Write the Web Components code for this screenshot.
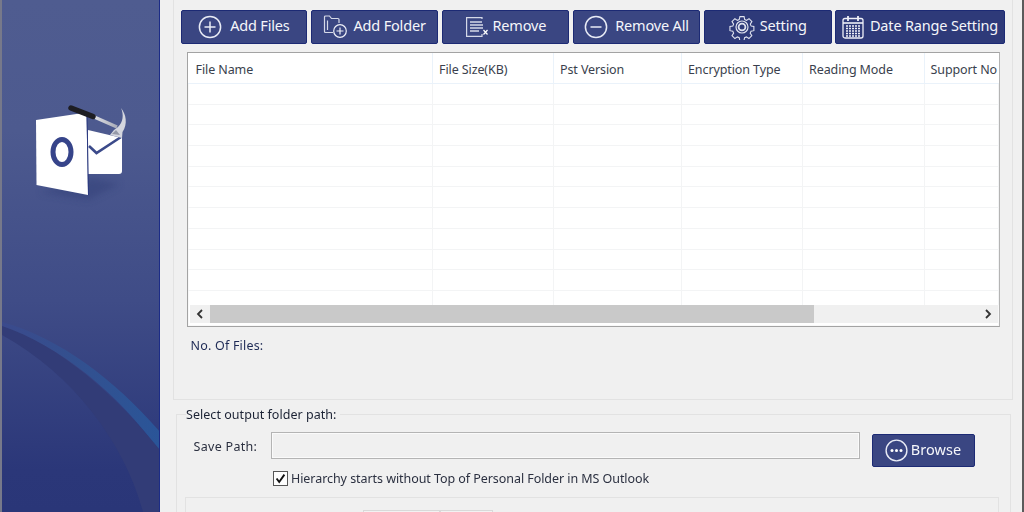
<!DOCTYPE html>
<html><head><meta charset="utf-8">
<style>
html,body{margin:0;padding:0;background:#f0f0f0}
body{width:1024px;height:512px;overflow:hidden;font-family:"Noto Sans","Open Sans",sans-serif;font-size:12.5px;color:#1e2a44}
</style></head><body>
<app-shell>
  <side-bar slot="side"></side-bar>
  <files-panel slot="main">
    <tool-bar>
      <tool-button icon="plus" w="126.8" g="8">Add Files</tool-button>
      <tool-button icon="folder" w="127.4" g="5">Add Folder</tool-button>
      <tool-button icon="remove" w="127.4" g="3.5">Remove</tool-button>
      <tool-button icon="minus" w="127.4" g="7">Remove All</tool-button>
      <tool-button icon="gear" w="127.8" g="5" dark>Setting</tool-button>
      <tool-button icon="cal" w="169.5" g="6" dark>Date Range Setting</tool-button>
    </tool-bar>
    <file-table></file-table>
    <file-count>No. Of Files:</file-count>
  </files-panel>
  <output-group slot="main"></output-group>
</app-shell>
<script>
const icons={
plus:`<svg width="24" height="24" viewBox="0 0 24 24" fill="none" stroke="#e8ebf5" stroke-width="1.5"><circle cx="12" cy="12" r="10.6"/><path d="M12 6.5v11M6.5 12h11"/></svg>`,
minus:`<svg width="24" height="24" viewBox="0 0 24 24" fill="none" stroke="#e8ebf5" stroke-width="1.5"><circle cx="12" cy="12" r="10.6"/><path d="M6.5 12h11"/></svg>`,
folder:`<svg width="25" height="25" viewBox="0 0 25 25" fill="none" stroke="#d5d9e8" stroke-width="1.2"><path d="M10 18.5H2.5a1 1 0 0 1-1-1V3a1 1 0 0 1 1-1h4l2 2.5h6.5a1 1 0 0 1 1 1V9"/><path d="M4.5 16V6.5" /><circle cx="17" cy="17" r="6.3" stroke="#eef0f8"/><path d="M17 13.5v7M13.5 17h7" stroke="#eef0f8"/></svg>`,
remove:`<svg width="24" height="22" viewBox="0 0 24 22" fill="none" stroke="#d5d9e8" stroke-width="1.2"><path d="M17 3V1.6H1.6v18.8H17V18"/><path d="M5 6h12M5 9h13M5 12h13M5 15h9" stroke-width="1.4"/><path d="M18.5 14l4 4.5M22.500 14l-4 4.5" stroke="#fff"/></svg>`,
gear:`<svg width="26" height="26" viewBox="0 0 26 26" fill="none" stroke="#dfe2ee" stroke-width="1.2"><path d="M10.7 1.5h4.6l.7 3.2 2 .9 2.8-1.8 3.2 3.2-1.8 2.8.9 2-.1 0 3.2.7v4.6l-3.2.7-.9 2 1.8 2.8-3.2 3.2-2.8-1.8-2 .9-.7 3.2h-4.6l-.7-3.2-2-.9-2.8 1.8-3.2-3.2 1.8-2.8-.9-2-3.2-.7v-4.6l3.2-.7.9-2-1.8-2.8 3.2-3.2 2.8 1.8 2-.9z" transform="translate(1.3 1.3) scale(.9)"/><circle cx="13" cy="13" r="6"/><circle cx="13" cy="13" r="3.4" stroke-width="1.8"/></svg>`,
cal:`<svg width="22" height="24" viewBox="0 0 22 24" fill="none" stroke="#eef0f8" stroke-width="1.3"><rect x="1" y="3.5" width="20" height="19.5" rx="2"/><path d="M1 8h20" stroke-width="1.6"/><path d="M6 1v5M16 1v5" stroke-width="1.8"/><path d="M4 11h14M4 13.5h14M4 16h14M4 18.5h14M4 21h14" stroke-dasharray="2 1" stroke-width="1.5"/></svg>`,
dots:`<svg width="23" height="23" viewBox="0 0 23 23" fill="none" stroke="#e8ebf5" stroke-width="1.4"><circle cx="11.5" cy="11.5" r="10.4"/><g fill="#fff" stroke="none"><circle cx="7" cy="11.5" r="1.5"/><circle cx="11.5" cy="11.5" r="1.5"/><circle cx="16" cy="11.5" r="1.5"/></g></svg>`
};
function def(name,css,html,init){
  customElements.define(name,class extends HTMLElement{
    constructor(){super();const r=this.attachShadow({mode:'open'});r.innerHTML=`<style>${css}</style>${html}`;}
    connectedCallback(){init&&init.call(this,this.shadowRoot);}
  });
}
def('app-shell',`:host{display:flex;width:1024px;height:512px;overflow:hidden}
 .side{flex:0 0 160px}
 .main{flex:0 0 862px;display:flex;flex-direction:column;height:512px;background:#f0f0f0;filter:blur(.35px)}
 .edge{flex:0 0 2px;background:#5b5b5b}`,
 `<div class="side"><slot name="side"></slot></div><div class="main"><slot name="main"></slot></div><div class="edge"></div>`);
def('side-bar',`:host{display:block;position:relative;box-sizing:border-box;width:160px;height:512px;overflow:hidden;border-left:2px solid #77798a;border-right:1px solid #1c2c86;background:linear-gradient(#4f5c90 0,#4d5a8f 130px,#3f4c87 300px,#2b3779 470px,#2a3678 512px);padding:98px 0 0 26px}
 .sw{position:absolute;left:-2px;top:0}
 .logo{position:relative;display:block;filter:blur(.4px)}`,
 `<svg class="sw" width="160" height="512" viewBox="0 0 160 512">
   <defs><linearGradient id="hl" x1="0" x2="1" y1="0" y2="0"><stop offset="0" stop-color="#3b4a8c"/><stop offset=".45" stop-color="#33508f"/><stop offset="1" stop-color="#2a5598"/></linearGradient></defs>
   <path d="M2 322C60 338 115 380 160 432V452C120 395 60 345 2 327Z" fill="url(#hl)"/>
   <path d="M2 326C60 345 115 395 160 450V512H143C125 445 75 375 2 335Z" fill="#323c77"/>
 </svg>
 <svg class="logo" width="104" height="112" viewBox="28 98 104 112">
   <defs><filter id="b" x="-30%" y="-80%" width="160%" height="260%"><feGaussianBlur stdDeviation="3.500"/></filter>
   <linearGradient id="hd" x1="0" x2="1"><stop offset="0" stop-color="#e4e5ea"/><stop offset="1" stop-color="#a9acb8"/></linearGradient></defs>
   <path d="M40 192L88 200L120 184L92 178Z" fill="#333f78" opacity=".5" filter="url(#b)"/>
   <path d="M88 130L122 138V171a3 3 0 0 1-3 3H88Z" fill="#fff"/>
   <path d="M89 146L96.500 153L121 137" fill="none" stroke="#3b4a8a" stroke-width="2.600"/>
   <path d="M36 120L86.500 112.500L88 195L36.500 185Z" fill="#fff"/>
   <path d="M87 113L88.500 195" stroke="#2c3a80" stroke-width="1"/>
   <ellipse cx="62" cy="152" rx="9" ry="12.500" fill="none" stroke="#36448a" stroke-width="5"/>
   <path d="M92 116L117 127" stroke="url(#hd)" stroke-width="3.400"/>
   <path d="M71 108L93 116.500" stroke="#1d1d22" stroke-width="5.500" stroke-linecap="round"/>
   <path d="M121 108C126 114 128 124 122.500 132L122 138L110 135L114 130L118 127C123 122 124 115 121 108Z" fill="#d4d6de"/>
   <path d="M112 134L116 130L120 135Z" fill="#9599a8"/>
 </svg>`);
def('files-panel',`:host{display:block;box-sizing:border-box;flex:none;width:840px;height:400px;margin-left:12.500px;border:solid #e2e2e2;border-width:0 1.500px 1.500px 1.500px;padding:10px 0 0 7px}`,`<slot></slot>`);
def('tool-bar',`:host{display:flex;gap:3.600px;margin-bottom:8.500px}`,`<slot></slot>`);
def('tool-button',`:host{display:flex;align-items:center;justify-content:center;box-sizing:border-box;height:33.500px;border:1px solid #1c2a74;border-radius:2px;background:#3a4682;color:#f5f6fa;font-size:14.500px;letter-spacing:-.17px;white-space:nowrap}
 :host([dark]){background:#2e3a79}
 svg{display:block}
 .t{position:relative;top:-1.500px}`,
 `<span class="i"></span><span class="t"><slot></slot></span>`,function(r){
   this.style.width=this.getAttribute('w')+'px';
   const i=r.querySelector('.i');i.innerHTML=icons[this.getAttribute('icon')];i.style.marginRight=this.getAttribute('g')+'px';
 });
const cols=[245,121,128,121,122,74];
def('file-table',`:host{display:block;box-sizing:border-box;width:813px;height:275px;margin-left:6px;border:1px solid #a3a3a3;border-right-color:#b4b4b4;background:#fff;box-shadow:inset 0 0 0 1px #f8f8f8;overflow:hidden;color:#3a3f4d;font-size:12.500px}
 .body{height:252px;overflow:hidden}
 .r{display:grid;grid-template-columns:${cols.map(c=>c+'px').join(' ')};height:20.700px;box-sizing:border-box;border-bottom:1.500px solid #f3f4f5}
 .r>div{border-right:1.500px solid #f3f4f5}
 .h{height:31px;border-bottom:1.500px solid #eaf2fa;background:#fff}
 .h>div{border-right:1.500px solid #eaf2fa;padding:9px 0 0 6.500px;letter-spacing:-.1px;white-space:nowrap;line-height:15px;box-sizing:border-box}
 .h>div:first-child{padding-left:8px}
 .h>div:last-child{border-right:0;padding-left:6px}
 .sb{display:flex;height:18px;background:#f0f0f0;margin:0 1px 0 2px;align-items:center}
 .a{flex:0 0 20px;display:flex;justify-content:center}
 .t{flex:0 0 604px;height:18px;background:#c9c9c9}
 .f{flex:1}
 .a.e{flex:0 0 20px}`,
 `<div class="body"><div class="r h">${['File Name','File Size(KB)','Pst Version','Encryption Type','Reading Mode','Support No'].map(t=>`<div>${t}</div>`).join('')}</div>${Array(11).fill(`<div class="r">${cols.map(()=>'<div></div>').join('')}</div>`).join('')}</div>
 <div class="sb"><div class="a"><svg width="8" height="10" viewBox="0 0 8 10" fill="none" stroke="#333" stroke-width="1.800"><path d="M6 1L2 5l4 4"/></svg></div><div class="t"></div><div class="f"></div><div class="a e"><svg width="8" height="10" viewBox="0 0 8 10" fill="none" stroke="#333" stroke-width="1.800"><path d="M2 1l4 4-4 4"/></svg></div></div>`);
def('file-count',`:host{display:block;margin:10px 0 0 10px;color:#1e2a55;line-height:17px;letter-spacing:.2px}`,`<slot></slot>`);
def('output-group',`:host{display:block;flex:none;box-sizing:border-box;width:835px;margin:6px 0 0 16px;font-size:12.500px;color:#2b3040}
 fieldset{margin:0;padding:0 0 0 9px;border:1.500px solid #e2e2e2;border-bottom:0;height:130px;box-sizing:border-box}
 legend{padding:0 3px 0 0;margin-left:0;line-height:17px;color:#1c2335;letter-spacing:.04px}
 .row{display:flex;align-items:flex-start;height:37px;margin-top:7px}
 .lab{margin:8px 13px 0 7.500px;line-height:17px;width:64px;white-space:nowrap;letter-spacing:.3px}
 .inp{box-sizing:border-box;width:589px;height:27px;margin-top:2px;border:1px solid #b4b4b4;box-shadow:inset 0 0 0 1px #fafafa;background:#f0f0f0}
 .br{margin:3.500px 0 0 12px;display:flex;align-items:center;justify-content:center;box-sizing:border-box;width:103px;height:33.500px;border:1px solid #1c2a74;border-radius:2px;background:#3a4682;color:#f5f6fa;font-size:14.500px;letter-spacing:.05px}
 .br svg{margin-right:3px;display:block}
 .br span{position:relative;top:-1px}
 .chk{display:flex;align-items:center;margin:2px 0 0 87px;height:18px;color:#2b3040;white-space:nowrap;letter-spacing:-.06px}
 .box{box-sizing:border-box;width:15px;height:15px;border:1px solid #555;background:#fdfdfd;margin-right:3px;display:block}
 .inner{box-sizing:border-box;width:814px;height:40px;margin-top:10px;border:1.500px solid #e2e2e2;display:block;padding-left:177px;padding-top:11.500px;margin-left:-1.500px}
 .tabs{display:flex}
 .tabs i{display:block;height:10px;border:1px solid #d9d9d9;border-bottom:0;background:#f2f2f2;box-sizing:border-box}`,
 `<fieldset><legend>Select output folder path:</legend>
  <div class="row"><div class="lab">Save Path:</div><div class="inp"></div><div class="br">${icons.dots}<span>Browse</span></div></div>
  <div class="chk"><svg class="box" viewBox="0 0 15 15"><path d="M3 7.500L6 11.500L12 3" fill="none" stroke="#111" stroke-width="2.200"/></svg><span>Hierarchy starts without Top of Personal Folder in MS Outlook</span></div>
  <div class="inner"><div class="tabs"><i style="width:77px"></i><i style="width:53px"></i></div></div>
 </fieldset>`);
</script>
</body></html>
